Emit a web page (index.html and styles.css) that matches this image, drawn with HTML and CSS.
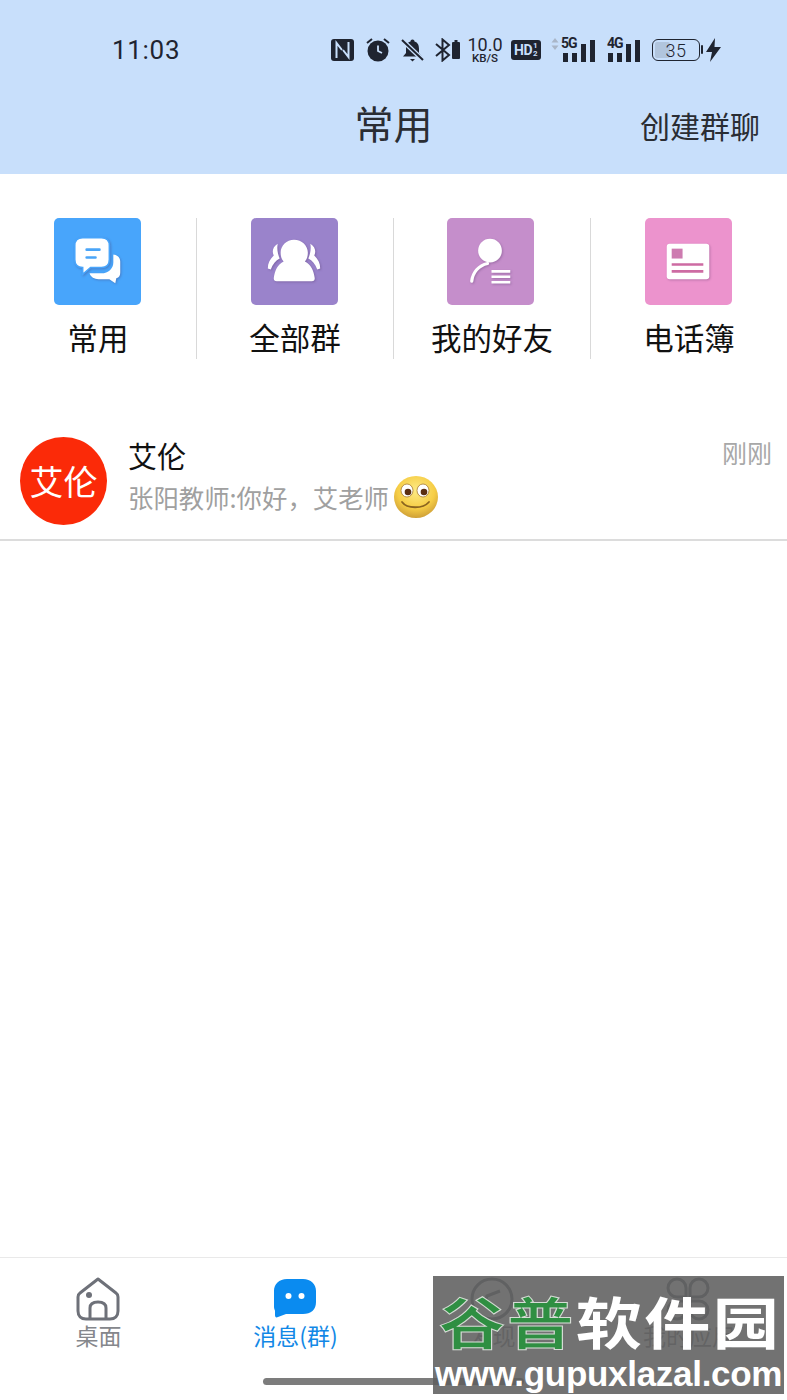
FILE: index.html
```html
<!DOCTYPE html>
<html lang="zh-CN">
<head>
<meta charset="utf-8">
<title>常用</title>
<link rel="stylesheet" href="styles.css">
</head>
<body>
<div class="page">
  <header class="top">
    <div class="status">
      <span class="time">11:03</span>
      <div class="status-icons">
        <svg class="si-nfc" width="23" height="24" viewBox="0 0 23 24"><rect x="0" y="1" width="23" height="22" rx="3" fill="#1f2430"/><path d="M5.500 20V5l5.500 7M17.500 4v15l-5.500-7" fill="none" stroke="#c8dffb" stroke-width="2"/></svg>
        <svg class="si-alarm" width="24" height="26" viewBox="0 0 24 26"><circle cx="12" cy="14" r="10.500" fill="#1f2430"/><path d="M1 6l5-4M23 6l-5-4" stroke="#1f2430" stroke-width="2" fill="none"/><path d="M12 8.500V14l4 2" stroke="#c8dffb" stroke-width="1.800" fill="none"/></svg>
        <svg class="si-bell" width="23" height="24" viewBox="0 0 23 24"><path d="M11.500 1.500c-1.500 0-2 1-2 2C6 4.500 5 7.500 5 11v4l-3 3.500h19L18 15v-4c0-3.500-1-6.500-4.500-7.500 0-1-.5-2-2-2z" fill="#1f2430"/><path d="M9 21h5l-2.500 2.500z" fill="#1f2430"/><path d="M1 2l21 20" stroke="#c8dffb" stroke-width="4.500"/><path d="M1 2l21 20" stroke="#1f2430" stroke-width="2"/></svg>
        <svg class="si-bt" width="25" height="24" viewBox="0 0 25 24"><path d="M1 6l13 11-6.500 5.500v-21L14 7 1 18" fill="none" stroke="#1f2430" stroke-width="2"/><rect x="17" y="4" width="8" height="17" rx="1" fill="#1f2430"/><rect x="19.500" y="2" width="3" height="2" fill="#1f2430"/></svg>
        <div class="speed"><span class="speed-num">10.0</span><span class="speed-unit">KB/S</span></div>
        <div class="hd"><span class="hd-text">HD</span><span class="hd-sub"><i>1</i><i>2</i></span></div>
        <div class="net net-5g">
          <svg class="updown" width="8" height="12" viewBox="0 0 8 12"><path d="M4 0l3.500 4.500h-7zM4 12L.5 7.500h7z" fill="#a9b6c8"/></svg>
          <span class="net-label">5G</span>
          <svg class="bars" width="32" height="22" viewBox="0 0 32 22"><path d="M0 13h5v9H0zM9 13h5v9H9zM18 4h5v18h-5zM27 0h5v22h-5z" fill="#1f2430"/></svg>
        </div>
        <div class="net net-4g">
          <span class="net-label">4G</span>
          <svg class="bars" width="32" height="22" viewBox="0 0 32 22"><path d="M0 13h5v9H0zM9 13h5v9H9zM18 4h5v18h-5zM27 0h5v22h-5z" fill="#1f2430"/></svg>
        </div>
        <div class="battery"><span class="battery-fill"></span><span class="battery-num">35</span></div>
        <svg class="si-bolt" width="15" height="24" viewBox="0 0 15 24"><path d="M9 0L0 14h6l-2 10 11-15H8.500z" fill="#1f2430"/></svg>
      </div>
    </div>
    <div class="title-bar">
      <h1 class="title">常用</h1>
      <span class="action">创建群聊</span>
    </div>
  </header>

  <main class="main">
    <nav class="shortcuts">
      <div class="shortcut">
        <div class="tile tile-blue">
          <svg class="tile-icon" width="87" height="87" viewBox="0 0 88 88">
            <path d="M59 37c5 0 8 3 8 7v11c0 3-1 5-4 6l-1 5-6-4H45c-4 0-8-2-9-6h12c7 0 12-5 12-11v-8z" fill="#fff"/>
            <path d="M29 20h19c5 0 8 3 8 8v14c0 5-3 8-8 8H37l-8 7 0-7c-5 0-8-3-8-8V28c0-5 3-8 8-8z" fill="#fff" stroke="#48a5fb" stroke-width="1.600"/>
            <path d="M33 32h13M33 40h9" stroke="#4aa5f8" stroke-width="2.600" stroke-linecap="round"/>
          </svg>
        </div>
        <span class="label">常用</span>
      </div>
      <div class="shortcut">
        <div class="tile tile-violet">
          <svg class="tile-icon" width="87" height="87" viewBox="0 0 88 88">
            <path d="M27 26c-5 3-6 8-4 12-4 4-6 8-6 13l3 1c2-5 5-9 9-11-2-5-3-10-2-15zM60 26c5 3 6 8 4 12 4 4 6 8 6 13l-3 1c-2-5-5-9-9-11 2-5 3-10 2-15z" fill="#fff"/>
            <path d="M43.500 22c8 0 14 6 14 13 0 4-1 7-3 9 6 3 9 9 10 17 0 2-1 3-3 3H26c-2 0-3-1-3-3 1-8 4-14 10-17-2-2-3-5-3-9 0-7 6-13 13.500-13z" fill="#fff"/>
          </svg>
        </div>
        <span class="label">全部群</span>
      </div>
      <div class="shortcut">
        <div class="tile tile-orchid">
          <svg class="tile-icon" width="87" height="87" viewBox="0 0 88 88">
            <circle cx="43.500" cy="33" r="12" fill="#fff"/>
            <path d="M25 64c1-9 7-16 16-18" fill="none" stroke="#fff" stroke-width="3.200" stroke-linecap="round"/>
            <path d="M45 54h19M45 59.500h19M45 65h19" stroke="#fff" stroke-width="2.600"/>
          </svg>
        </div>
        <span class="label">我的好友</span>
      </div>
      <div class="shortcut">
        <div class="tile tile-pink">
          <svg class="tile-icon" width="87" height="87" viewBox="0 0 88 88">
            <rect x="22" y="26" width="43" height="36" rx="3" fill="#fff"/>
            <rect x="27" y="31" width="11" height="10" fill="#cd7bb0"/>
            <path d="M27 47h32M27 54h32" stroke="#cd6ba3" stroke-width="2.600"/>
          </svg>
        </div>
        <span class="label">电话簿</span>
      </div>
    </nav>

    <section class="chat-row">
      <div class="avatar">艾伦</div>
      <div class="chat-body">
        <div class="chat-head"><span class="chat-name">艾伦</span><span class="chat-time">刚刚</span></div>
        <div class="chat-preview">
          <span>张阳教师:你好&#xFF0C;艾老师</span>
          <svg class="smiley" width="46" height="44" viewBox="0 0 46 44">
            <defs><radialGradient id="face" cx="50%" cy="35%" r="65%"><stop offset="0%" stop-color="#fdeb85"/><stop offset="65%" stop-color="#f6cd45"/><stop offset="100%" stop-color="#cfa038"/></radialGradient></defs>
            <ellipse cx="23" cy="22" rx="22" ry="21" fill="url(#face)"/>
            <ellipse cx="14" cy="15.500" rx="6" ry="6.500" fill="#fff" stroke="#a47a33" stroke-width=".8"/>
            <ellipse cx="30" cy="15.500" rx="6" ry="6.500" fill="#fff" stroke="#a47a33" stroke-width=".8"/>
            <circle cx="15" cy="17" r="3.300" fill="#5b2f12"/>
            <circle cx="31" cy="17" r="3.300" fill="#5b2f12"/>
            <path d="M9 27c5 7 21 7 27 0" fill="none" stroke="#8a6420" stroke-width="1.800" stroke-linecap="round"/>
          </svg>
        </div>
      </div>
    </section>
  </main>

  <footer class="tabbar">
    <div class="tab">
      <svg width="44" height="44" viewBox="0 0 44 44"><path d="M22 2L4 16c-1.500 1-2 2.500-2 4v14c0 5 3 8 8 8h24c5 0 8-3 8-8V20c0-1.500-.5-3-2-4z" fill="none" stroke="#6e7179" stroke-width="3" stroke-linejoin="round"/><circle cx="13" cy="18" r="3" fill="#6e7179"/><path d="M14 41V31c0-4 3-6 8-6s8 2 8 6v10" fill="none" stroke="#6e7179" stroke-width="3"/></svg>
      <span class="tab-label">桌面</span>
    </div>
    <div class="tab tab-active">
      <svg width="44" height="44" viewBox="0 0 44 44"><path d="M14 2h16c8 0 13 5 13 12v11c0 8-5 12-13 12H13l-8 3c-2 1-3 0-3-2v-4c0-1-1-2-1-4V14C1 7 6 2 14 2z" fill="#0a8bf0"/><circle cx="15.500" cy="19" r="3" fill="#fff"/><circle cx="28.500" cy="19" r="3" fill="#fff"/></svg>
      <span class="tab-label">消息(群)</span>
    </div>
    <div class="tab">
      <svg width="44" height="44" viewBox="0 0 44 44"><circle cx="22" cy="22" r="20" fill="none" stroke="#6e7179" stroke-width="3"/><path d="M30 14l-13 5-3 11" fill="none" stroke="#6e7179" stroke-width="3"/></svg>
      <span class="tab-label">发现</span>
    </div>
    <div class="tab">
      <svg width="44" height="44" viewBox="0 0 44 44"><g fill="none" stroke="#6e7179" stroke-width="3"><path d="M20 20h-9a9 9 0 1 1 9-9zM24 20h9a9 9 0 1 0-9-9zM20 24h-9a9 9 0 1 0 9 9zM24 24h9a9 9 0 1 1-9 9z"/></g></svg>
      <span class="tab-label">我的应用</span>
    </div>
  </footer>

  <div class="home-bar"></div>

  <div class="watermark">
    <div class="wm-name"><span class="wm-green">谷普</span><span class="wm-white">软件园</span></div>
    <div class="wm-url">www.gupuxlazal.com</div>
  </div>
</div>
</body>
</html>
```

FILE: styles.css
```css
* { box-sizing: border-box; }

html, body {
  margin: 0;
  padding: 0;
  background: #fff;
}

body {
  font-family: "Noto Sans CJK SC", "Noto Sans", sans-serif;
  color: #111;
}

.page {
  position: relative;
  width: 787px;
  height: 1400px;
  display: flex;
  flex-direction: column;
  overflow: hidden;
}

/* Header */
.top {
  height: 174px;
  background: #c8dffb;
  flex: none;
}

.status {
  height: 100px;
  padding: 37px 66px 0 112px;
  display: flex;
  align-items: flex-start;
  justify-content: space-between;
}

.time {
  font-family: Roboto, sans-serif;
  font-size: 26px;
  line-height: 27px;
  letter-spacing: 0.7px;
  color: #1f2430;
}

.status-icons {
  display: flex;
  align-items: center;
  height: 26px;
  gap: 11px;
}

.si-nfc { margin-right: 1px; }

.speed {
  display: flex;
  flex-direction: column;
  align-items: center;
  width: 34px;
  margin-left: -3px;
  margin-right: -2px;
  font-family: Roboto, sans-serif;
  color: #1f2430;
}

.speed-num { font-size: 18px; line-height: 16px; }
.speed-unit { font-size: 11.500px; line-height: 11px; font-weight: 500; }

.hd {
  width: 30px;
  height: 20px;
  background: #1f2430;
  border-radius: 3px;
  display: flex;
  align-items: center;
  padding-left: 3px;
  color: #c8dffb;
  font-family: Roboto, sans-serif;
  font-weight: 700;
}

.hd-text { font-size: 14px; line-height: 14px; letter-spacing: -0.5px; }

.hd-sub {
  display: flex;
  flex-direction: column;
  margin-left: 1px;
  font-size: 8px;
  line-height: 8px;
}

.hd-sub i { font-style: normal; }

.net {
  position: relative;
  height: 24px;
}

.net-5g { width: 44px; margin-left: -1px; }
.net-4g { width: 33px; margin-left: 1px; }

.updown { position: absolute; left: 0; top: 0; }
.net .bars { position: absolute; right: 0; bottom: 0; }

.net-label {
  position: absolute;
  top: -2px;
  font-family: Roboto, sans-serif;
  font-size: 14px;
  line-height: 14px;
  font-weight: 700;
  color: #1f2430;
  letter-spacing: -1px;
  z-index: 1;
}

.net-5g .net-label { left: 10px; }
.net-4g .net-label { left: 0; }

.battery {
  position: relative;
  width: 48px;
  height: 22px;
  margin-right: 2px;
  margin-left: 1px;
  border: 1.500px solid #1f2430;
  border-radius: 6px;
  display: flex;
  align-items: center;
  justify-content: center;
  font-family: Roboto, sans-serif;
  font-size: 18px;
  color: #1f2430;
}

.battery::after {
  content: "";
  position: absolute;
  right: -4px;
  top: 5px;
  width: 2px;
  height: 9px;
  background: #1f2430;
  border-radius: 1px;
}

.battery-fill {
  position: absolute;
  left: 2px;
  top: 2px;
  bottom: 2px;
  width: 15px;
  background: #b1c5dd;
  border-radius: 2px;
}

.battery-num { position: relative; font-weight: 300; letter-spacing: 0.5px; }

.si-bolt { margin-left: -7px; }

.title-bar {
  position: relative;
  height: 74px;
  display: flex;
  align-items: flex-start;
  justify-content: center;
}

.title {
  margin: -4px 0 0;
  font-size: 39px;
  font-weight: 400;
  line-height: 52px;
  color: #2a2d33;
}

.action {
  position: absolute;
  right: 27px;
  top: 3px;
  font-size: 30px;
  line-height: 44px;
  color: #2a2d33;
}

/* Main */
.main {
  flex: 1;
  display: flex;
  flex-direction: column;
}

.shortcuts {
  display: grid;
  grid-template-columns: 197px 197px 197px 196px;
  margin-top: 44px;
  height: 140px;
}

.shortcut {
  display: flex;
  flex-direction: column;
  align-items: center;
  border-right: 1px solid #d9d9d9;
}

.shortcut:last-child { border-right: 0; }

.tile {
  width: 87px;
  height: 87px;
  margin-right: 1px;
  border-radius: 5px;
}

.tile-blue { background: #48a5fb; }
.tile-violet { background: #9a83cb; }
.tile-orchid { background: #c58ecb; margin-right: 3px; }
.tile-pink { background: #ec93cd; }

.tile-icon {
  display: block;
  filter: drop-shadow(1px 1.500px 1px rgba(70, 40, 90, 0.3));
}

.label {
  margin-top: 10px;
  font-size: 30.500px;
  line-height: 44px;
  color: #111;
}

.chat-row {
  margin-top: 79px;
  height: 104px;
  padding-left: 20px;
  padding-right: 15px;
  display: flex;
  gap: 21px;
  border-bottom: 2px solid #dcdcdc;
}

.avatar {
  width: 87px;
  height: 88px;
  border-radius: 50%;
  background: #fb2a08;
  color: #fff;
  font-size: 34px;
  line-height: 88px;
  text-align: center;
  flex: none;
}

.chat-body { flex: 1; }

.chat-head {
  display: flex;
  justify-content: space-between;
  height: 37px;
}

.chat-name {
  font-size: 29px;
  line-height: 37px;
  color: #111;
}

.chat-time {
  font-size: 25px;
  line-height: 30px;
  color: #a8a8a8;
}

.chat-preview {
  display: flex;
  align-items: center;
  height: 46px;
  font-size: 25.400px;
  color: #a0a0a0;
  gap: 4px;
}

.smiley { flex: none; }

/* Tab bar */
.tabbar {
  height: 143px;
  flex: none;
  display: grid;
  grid-template-columns: 197px 197px 197px 196px;
  border-top: 1px solid #e9e9e9;
  align-items: start;
}

.tab {
  display: flex;
  flex-direction: column;
  align-items: center;
  padding-top: 19px;
  color: #85878c;
}

.tab svg { display: block; margin-right: 2px; }

.tab-label {
  font-size: 23px;
  line-height: 30px;
  margin-top: -1px;
}

.tab-active { color: #1288e6; }

.home-bar {
  position: absolute;
  left: 263px;
  top: 1378px;
  width: 261px;
  height: 7px;
  background: #7c7c7c;
  border-radius: 4px;
}

/* Watermark */
.watermark {
  position: absolute;
  left: 433px;
  top: 1276px;
  width: 351px;
  height: 118px;
  background: rgba(95, 95, 95, 0.88);
  overflow: hidden;
}

.wm-name {
  display: flex;
  height: 80px;
  padding-top: 16px;
  padding-left: 5px;
  font-size: 56px;
  line-height: 56px;
  font-weight: 700;
  letter-spacing: 2px;
  white-space: nowrap;
  transform: scaleX(1.18);
  transform-origin: left top;
}

.wm-green {
  color: #2f8f42;
  -webkit-text-stroke: 1px #d5dcd5;
}

.wm-white { color: #fff; }

.wm-url {
  font-family: "Liberation Sans", sans-serif;
  font-size: 35px;
  line-height: 36px;
  font-weight: 700;
  letter-spacing: -0.3px;
  color: #fff;
  white-space: nowrap;
  text-align: center;
}
```
